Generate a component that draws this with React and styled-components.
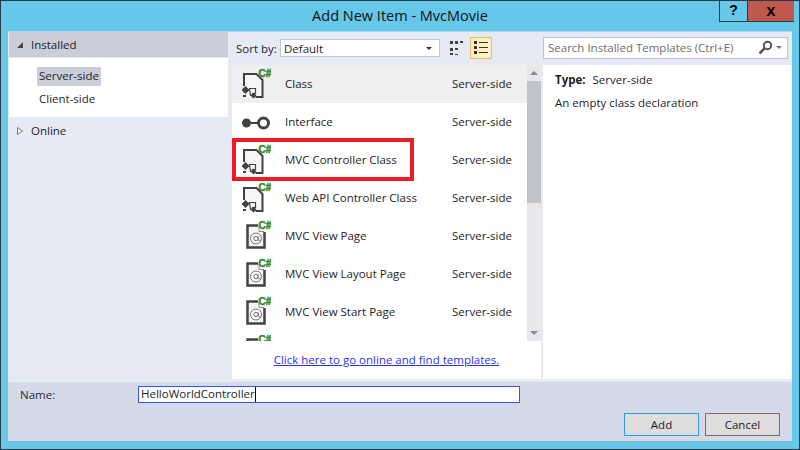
import React from 'react';
import styled, { createGlobalStyle } from 'styled-components';

const GlobalStyle = createGlobalStyle`
  html, body {
    margin: 0;
    padding: 0;
    background: #65c8e9;
  }
  body {
    font-family: 'Open Sans', 'Noto Sans', sans-serif;
    font-size: 11.5px;
    color: #1e1e1e;
  }
`;

const items = [
  { name: 'Class', icon: 'class' },
  { name: 'Interface', icon: 'interface' },
  { name: 'MVC Controller Class', icon: 'class' },
  { name: 'Web API Controller Class', icon: 'class' },
  { name: 'MVC View Page', icon: 'view' },
  { name: 'MVC View Layout Page', icon: 'view' },
  { name: 'MVC View Start Page', icon: 'view' },
  { name: '', icon: 'view' },
];

const CSharp = () => (
  <text
    x="19.5"
    y="8.5"
    fontFamily="'Liberation Sans', sans-serif"
    fontWeight="bold"
    fontSize="10"
    fill="#388a34"
    stroke="#388a34"
    strokeWidth="0.5"
  >
    C#
  </text>
);

const ClassIcon = () => (
  <svg width="32" height="32" viewBox="0 0 32 32">
    <path d="M5 7h13l6 6v16H5z" fill="#f6f6f6" />
    <path d="M5 18V6h12.500l6 6v17h-7M4 28h3" fill="none" stroke="#424242" strokeWidth="2" />
    <path d="M6.500 18l4 4-4 4-4-4z" fill="#424242" />
    <path d="M10.500 20.500h6v5h-3v2h-2z" fill="#f6f6f6" stroke="#424242" strokeWidth="1.200" />
    <path d="M14.500 24.500l3 3-3 3-3-3z" fill="#424242" />
    <CSharp />
  </svg>
);

const ViewIcon = () => (
  <svg width="32" height="32" viewBox="0 0 32 32">
    <path d="M9 6h10l6 6v15H9z" fill="#f6f6f6" />
    <path d="M19 5.500H8.500v22h17V12" fill="none" stroke="#424242" strokeWidth="2.500" />
    <path d="M20 6v5.500h5" fill="none" stroke="#8a8a8a" strokeWidth="1" />
    <circle cx="17" cy="18.500" r="5.500" fill="none" stroke="#777" strokeWidth="1" />
    <circle cx="17" cy="18.500" r="2.200" fill="none" stroke="#777" strokeWidth="1" />
    <path d="M19.200 16.500v3c0 1.500 2 1.500 2.500 .5" fill="none" stroke="#777" strokeWidth="1" />
    <CSharp />
  </svg>
);

const InterfaceIcon = () => (
  <svg width="32" height="32" viewBox="0 0 32 32">
    <circle cx="7.500" cy="17" r="4.500" fill="#424242" />
    <path d="M11 17h8" stroke="#424242" strokeWidth="2" />
    <circle cx="24.500" cy="17" r="5" fill="#fff" stroke="#424242" strokeWidth="3" />
  </svg>
);

const icons = { class: ClassIcon, view: ViewIcon, interface: InterfaceIcon };

const Window = styled.div`
  position: relative;
  width: 800px;
  height: 450px;
  box-sizing: border-box;
  border: 1px solid #2b3a42;
  display: flex;
  flex-direction: column;
  overflow: hidden;
`;

const TitleBar = styled.div`
  height: 30px;
  flex: none;
  display: flex;
  justify-content: center;
  position: relative;
  font-size: 14.5px;
  line-height: 29px;
  color: #111;
`;

const Controls = styled.div`
  position: absolute;
  top: -1px;
  right: 5px;
  display: flex;
  height: 21px;
  border: 1px solid #2b3a42;
  border-top: 0;
  border-right: 0;
`;

const ControlButton = styled.div`
  width: ${(p) => p.$w}px;
  background: ${(p) => p.$bg};
  display: flex;
  align-items: center;
  justify-content: center;
  font-family: 'Liberation Sans', sans-serif;
  font-weight: bold;
  font-size: ${(p) => p.$size}px;
  line-height: 19px;
  color: #000;
  & + & {
    border-left: 1px solid #2b3a42;
  }
`;

const Dialog = styled.div`
  flex: 1;
  margin: 0 7px 7px;
  display: flex;
  flex-direction: column;
  background: #e6eaf5;
  border-top: 1px solid #a5d8ea;
  min-height: 0;
`;

const Body = styled.div`
  flex: 1;
  display: grid;
  grid-template-columns: 224px 311px 1fr;
  grid-template-rows: 33px 1fr;
  padding-bottom: 3px;
  min-height: 0;
`;

const Tree = styled.div`
  grid-row: 1 / 3;
  padding: 0 4px 0 1px;
  display: flex;
  flex-direction: column;
`;

const TreeHead = styled.div`
  height: 25px;
  display: flex;
  align-items: center;
  padding-left: 7px;
  gap: 7px;
  background: ${(p) => (p.$open ? '#cbced9' : 'transparent')};
  margin-bottom: ${(p) => (p.$open ? '1px' : '0')};
  color: #1e1e1e;
`;

const Children = styled.div`
  background: #fff;
  height: 59px;
  padding: 9px 0 0 28px;
  margin-bottom: 1px;
  box-sizing: border-box;
`;

const Child = styled.div`
  display: table;
  height: 19px;
  line-height: 18px;
  padding: 0 2px;
  margin-bottom: 4px;
  background: ${(p) => (p.$selected ? '#cbced9' : 'transparent')};
`;

const Arrow = styled.svg`
  width: 8px;
  height: 10px;
  flex: none;
`;

const SortBar = styled.div`
  display: flex;
  align-items: center;
  align-self: start;
  height: 22px;
  margin-top: 5px;
  padding-left: 4px;
`;

const SortLabel = styled.span`
  width: 44px;
  flex: none;
  white-space: nowrap;
`;

const Select = styled.div`
  width: 160px;
  height: 18px;
  flex: none;
  box-sizing: border-box;
  border: 1px solid #bdc5de;
  background: #fff;
  display: flex;
  align-items: center;
  justify-content: space-between;
  padding: 0 7px 0 3px;
  margin-right: 9px;
`;

const Caret = styled.span`
  width: 0;
  height: 0;
  border-left: 3.5px solid transparent;
  border-right: 3.5px solid transparent;
  border-top: 3.5px solid ${(p) => p.$color || '#333'};
`;

const GridToggle = styled.div`
  width: 15px;
  flex: none;
  display: flex;
`;

const ListToggle = styled.div`
  width: 22px;
  height: 22px;
  flex: none;
  margin-left: 6px;
  box-sizing: border-box;
  display: flex;
  align-items: center;
  justify-content: center;
  background: #fdf0c2;
  border: 1px solid #e5c365;
`;

const SearchCell = styled.div`
  padding: 5px 4px 0 0;
`;

const SearchBox = styled.div`
  height: 22px;
  box-sizing: border-box;
  border: 1px solid #bdc5de;
  background: #fff;
  display: flex;
  align-items: center;
  justify-content: space-between;
  padding: 0 5px 2px 4px;
  color: #6d6d6d;
`;

const SearchTools = styled.div`
  display: flex;
  align-items: center;
  gap: 3px;
`;

const ListPanel = styled.div`
  background: #fff;
  display: flex;
  flex-direction: column;
  min-height: 0;
  position: relative;
  margin-right: 2px;
`;

const ListWrap = styled.div`
  height: 276px;
  flex: none;
  display: flex;
`;

const List = styled.div`
  flex: 1;
  overflow: hidden;
`;

const Row = styled.div`
  height: 38px;
  display: flex;
  align-items: center;
  background: ${(p) => (p.$selected ? '#efefef' : 'transparent')};
`;

const RowIcon = styled.div`
  width: 53px;
  height: 32px;
  padding-left: 7px;
  box-sizing: border-box;
  flex: none;
`;

const RowName = styled.div`
  flex: 1;
  padding-bottom: 2px;
`;

const RowType = styled.div`
  width: 75px;
  flex: none;
  padding-bottom: 2px;
`;

const Scrollbar = styled.div`
  width: 14px;
  background: #e8e8ec;
  display: flex;
  flex-direction: column;
  justify-content: space-between;
  align-items: center;
  padding: 6px 0;
  box-sizing: border-box;
  position: relative;
`;

const Thumb = styled.div`
  position: absolute;
  top: 16px;
  left: 0;
  right: 0;
  height: 122px;
  background: #c2c3c9;
`;

const UpCaret = styled.span`
  width: 0;
  height: 0;
  border-left: 4px solid transparent;
  border-right: 4px solid transparent;
  border-bottom: 4px solid #868999;
`;

const DownCaret = styled(Caret)`
  border-left-width: 4px;
  border-right-width: 4px;
  border-top-width: 4px;
`;

const LinkRow = styled.div`
  flex: 1;
  display: flex;
  justify-content: center;
  padding-top: 11px;
`;

const OnlineLink = styled.a`
  color: #2a35e6;
  text-decoration: underline;
  cursor: pointer;
  height: 17px;
`;

const Highlight = styled.div`
  position: absolute;
  left: 0;
  top: 73px;
  width: 182px;
  height: 43px;
  box-sizing: border-box;
  border: 4px solid #ed1c24;
  pointer-events: none;
`;

const Details = styled.div`
  background: #fff;
  padding: 6px 12px;
  line-height: 17px;
`;

const DetailLine = styled.div`
  margin-bottom: 6px;
`;

const Strong = styled.strong`
  font-weight: 700;
  margin-right: 7px;
`;

const Footer = styled.div`
  height: 60px;
  flex: none;
  background: #d5dae8;
  display: flex;
  flex-direction: column;
  padding: 4px 12px 0 12px;
  box-sizing: border-box;
  border-bottom: 1px solid #7fb8cc;
`;

const NameRow = styled.div`
  display: flex;
  align-items: center;
`;

const NameLabel = styled.label`
  width: 118px;
  color: #2a2a2a;
`;

const NameInput = styled.div`
  width: 382px;
  height: 17px;
  box-sizing: border-box;
  background: #fff;
  border: 1px solid #3355ff;
  line-height: 14px;
  padding-left: 2px;
  display: flex;
`;

const Cursor = styled.span`
  width: 1px;
  height: 15px;
  background: #000;
`;

const Buttons = styled.div`
  display: flex;
  justify-content: flex-end;
  gap: 6px;
  margin-top: 10px;
`;

const Button = styled.button`
  width: 75px;
  height: 23px;
  box-sizing: border-box;
  background: #dddddd;
  border: 1px solid ${(p) => (p.$primary ? '#3399ff' : '#707070')};
  font: inherit;
  color: #1e1e1e;
  padding: 0;
`;

const App = () => (
  <Window>
    <GlobalStyle />
    <TitleBar>
      Add New Item - MvcMovie
      <Controls>
        <ControlButton $w={27} $bg="transparent" $size={14}>?</ControlButton>
        <ControlButton $w={46} $bg="#c1584e" $size={16}>x</ControlButton>
      </Controls>
    </TitleBar>
    <Dialog>
      <Body>
        <Tree>
          <TreeHead $open>
            <Arrow viewBox="0 0 8 10">
              <path d="M1 8h6V2z" fill="#444" />
            </Arrow>
            Installed
          </TreeHead>
          <Children>
            <Child $selected>Server-side</Child>
            <Child>Client-side</Child>
          </Children>
          <TreeHead>
            <Arrow viewBox="0 0 8 10">
              <path d="M1.5 1.5l5 3.500-5 3.500z" fill="#fff" stroke="#777" />
            </Arrow>
            Online
          </TreeHead>
        </Tree>
        <SortBar>
          <SortLabel>Sort by:</SortLabel>
          <Select>
            Default
            <Caret />
          </Select>
          <GridToggle>
            <svg width="15" height="15" viewBox="0 0 15 15" fill="#424242">
              <path d="M1 0h3v3H1zM6 0h3v3H6zM11 0h3v2h-3zM1 7h3v3H1zM6 7h3v2H6zM1 12h3v2H1zM6 13h3v1H6z" />
            </svg>
          </GridToggle>
          <ListToggle>
            <svg width="14" height="14" viewBox="0 0 14 14" fill="#333">
              <path d="M0 0h3v3H0zM5 1h9v1H5zM0 5h3v3H0zM5 6h9v1H5zM0 10h3v3H0zM5 11h9v1H5z" />
            </svg>
          </ListToggle>
        </SortBar>
        <SearchCell>
          <SearchBox>
            Search Installed Templates (Ctrl+E)
            <SearchTools>
              <svg width="15" height="15" viewBox="0 0 15 15" fill="none" stroke="#555">
                <circle cx="9.5" cy="5.5" r="3.700" strokeWidth="2" />
                <path d="M6.500 8.500L1.500 13.500" strokeWidth="2.500" />
              </svg>
              <Caret $color="#777" />
            </SearchTools>
          </SearchBox>
        </SearchCell>
        <ListPanel>
          <ListWrap>
            <List>
              {items.map((item, i) => {
                const Icon = icons[item.icon];
                return (
                  <Row key={i} $selected={i === 0}>
                    <RowIcon><Icon /></RowIcon>
                    <RowName>{item.name}</RowName>
                    {item.name && <RowType>Server-side</RowType>}
                  </Row>
                );
              })}
            </List>
            <Scrollbar>
              <UpCaret />
              <Thumb />
              <DownCaret $color="#868999" />
            </Scrollbar>
          </ListWrap>
          <LinkRow>
            <OnlineLink>Click here to go online and find templates.</OnlineLink>
          </LinkRow>
          <Highlight />
        </ListPanel>
        <Details>
          <DetailLine><Strong>Type:</Strong>Server-side</DetailLine>
          <DetailLine>An empty class declaration</DetailLine>
        </Details>
      </Body>
      <Footer>
        <NameRow>
          <NameLabel>Name:</NameLabel>
          <NameInput>HelloWorldController<Cursor /></NameInput>
        </NameRow>
        <Buttons>
          <Button $primary>Add</Button>
          <Button>Cancel</Button>
        </Buttons>
      </Footer>
    </Dialog>
  </Window>
);

export default App;
